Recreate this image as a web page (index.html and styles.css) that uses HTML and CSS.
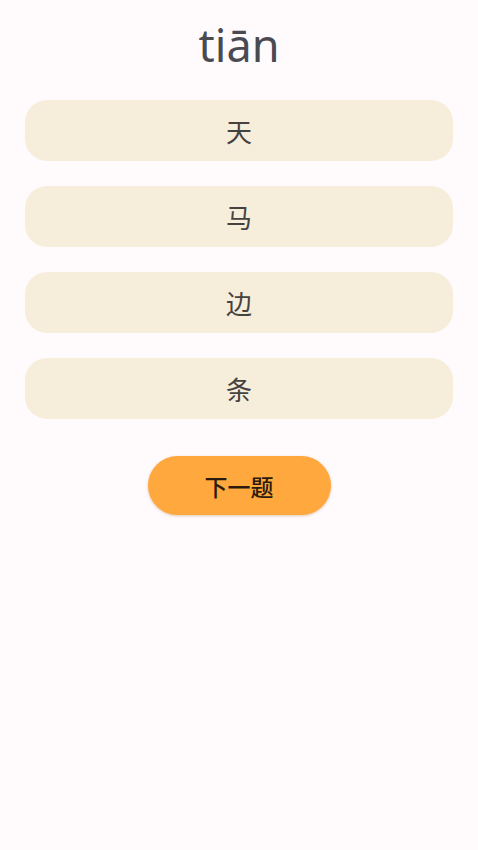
FILE: index.html
```html
<!DOCTYPE html>
<html lang="zh">
<head>
<meta charset="utf-8">
<link rel="stylesheet" href="styles.css">
</head>
<body>
<main class="page">
  <h1 class="pinyin">tiān</h1>
  <div class="options">
    <div class="option">天</div>
    <div class="option">马</div>
    <div class="option">边</div>
    <div class="option">条</div>
  </div>
  <button class="next">下一题</button>
</main>
</body>
</html>
```
FILE: styles.css
```css
html, body {
  margin: 0;
  padding: 0;
  background: #fffbfd;
  height: 100%;
}
body {
  font-family: "Noto Sans", "Noto Sans CJK SC", sans-serif;
}
.page {
  display: flex;
  flex-direction: column;
  align-items: center;
  padding: 14px 25px 0;
}
.pinyin {
  margin: 0;
  font-weight: 400;
  font-size: 45px;
  line-height: 62px;
  color: #4a4a52;
  font-family: "Noto Sans", sans-serif;
}
.options {
  width: 100%;
  display: flex;
  flex-direction: column;
  gap: 25px;
  margin-top: 24px;
}
.option {
  height: 61px;
  border-radius: 22px;
  background: #f6eddb;
  display: flex;
  align-items: center;
  justify-content: center;
  font-family: "Noto Sans CJK SC", sans-serif;
  font-size: 26px;
  color: #45423f;
}
.next {
  margin-top: 37px;
  width: 183px;
  height: 59px;
  border: none;
  border-radius: 30px;
  background: #ffa83d;
  box-shadow: 0 1px 3px rgba(160, 100, 40, 0.35);
  font-family: "Noto Sans CJK SC", sans-serif;
  font-size: 23px;
  font-weight: 500;
  color: #2b1a0e;
  padding: 0;
}
```
